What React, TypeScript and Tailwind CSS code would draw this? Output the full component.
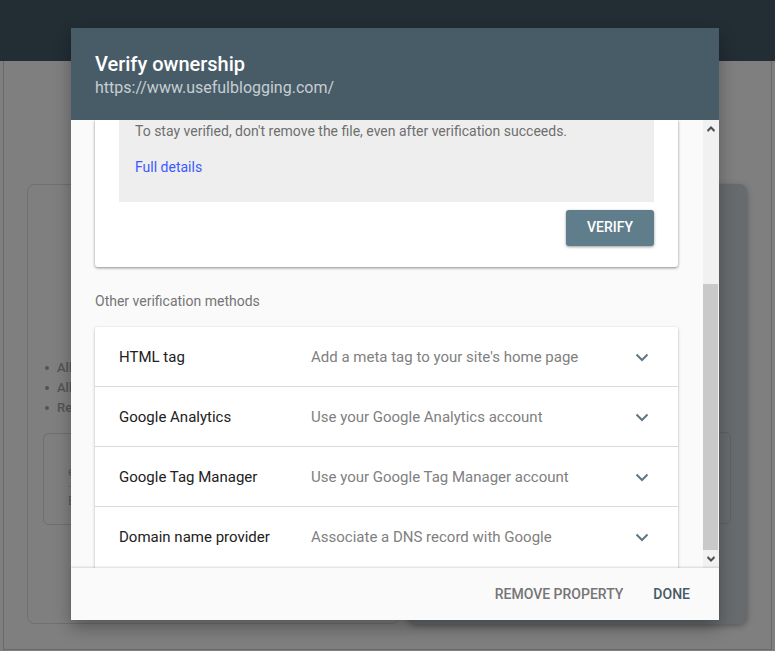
import React from "react";

const methods = [
  { name: "HTML tag", desc: "Add a meta tag to your site's home page" },
  { name: "Google Analytics", desc: "Use your Google Analytics account" },
  { name: "Google Tag Manager", desc: "Use your Google Tag Manager account" },
  { name: "Domain name provider", desc: "Associate a DNS record with Google" },
];

function Chevron() {
  return (
    <svg width="14" height="9" viewBox="0 0 14 9" fill="none" className="block">
      <path d="M1.5 1.5 7 7l5.5-5.5" stroke="#5f7683" strokeWidth="2" />
    </svg>
  );
}

function Background() {
  return (
    <div className="h-[651px] w-[775px] overflow-hidden bg-[#7f7f7f] font-['Roboto',sans-serif]">
      <div className="h-[61px] bg-[#222d34]" />
      <div className="mx-[3px] h-[589px] border-x border-b border-[#666a6c] px-[23px] pt-[123px]">
        <div className="flex gap-2">
          {/* left card */}
          <div className="h-[440px] w-[373px] rounded-lg border border-[#6f6f6f] px-[15px] pt-[173px]">
            <ul className="flex flex-col text-[13px] font-medium leading-5 text-[#4f5558]">
              <li className="flex items-center gap-2 pl-[2px]"><span className="size-1 rounded-full bg-[#4f5558]" />All users</li>
              <li className="flex items-center gap-2 pl-[2px]"><span className="size-1 rounded-full bg-[#4f5558]" />All data</li>
              <li className="flex items-center gap-2 pl-[2px]"><span className="size-1 rounded-full bg-[#4f5558]" />Requires</li>
            </ul>
            <div className="mt-[15px] h-[92px] w-[350px] rounded-md border border-[#6f6f6f] px-6 pt-7 text-[13px] text-[#5a5a5a]">
              <div className="border-b border-[#6f6f6f] pb-1">example</div>
              <div className="pt-1">Enter</div>
            </div>
          </div>
          {/* right card */}
          <div className="h-[440px] w-[339px] rounded-lg bg-[#676b6d] pr-4 pt-[248px] shadow-[0_2px_6px_rgba(0,0,0,0.3)]">
            <div className="ml-auto h-[92px] w-[100px] rounded-md border border-[#5d6163]" />
          </div>
        </div>
      </div>
    </div>
  );
}

export default function App() {
  return (
    <div className="relative h-[651px] w-[775px] overflow-hidden font-['Roboto',sans-serif]">
      <Background />
      {/* modal */}
      <div className="absolute left-[71px] top-[28px] flex h-[592px] w-[648px] flex-col bg-[#fafafa] shadow-[0_8px_16px_rgba(0,0,0,0.3)]">
        <div className="h-[92px] shrink-0 bg-[#485c68] px-6 pt-[23px]">
          <div className="text-[20px] font-medium leading-[26px] text-white">Verify ownership</div>
          <div className="mt-px text-[16px] leading-[20px] text-[#c6ced3]">https://www.usefulblogging.com/</div>
        </div>

        <div className="flex min-h-0 flex-1">
          <div className="min-w-0 flex-1 overflow-hidden pl-6 pr-[25px]">
            <div className="rounded-b-[3px] bg-white px-6 pb-[21px] shadow-[0_1px_3px_rgba(0,0,0,0.45)]">
              <div className="bg-[#eeeeee] px-4 pb-[25px] pt-px text-[14px] leading-5 text-[#6f6f6f]">
                <p>To stay verified, don't remove the file, even after verification succeeds.</p>
                <a className="mt-4 block text-[#3d5afe]">Full details</a>
              </div>
              <div className="mt-2 flex justify-end">
                <button className="h-9 w-[88px] rounded-[3px] bg-[#607d8b] pb-px text-[14px] font-medium text-white shadow-[0_1px_3px_rgba(0,0,0,0.4)]">
                  VERIFY
                </button>
              </div>
            </div>

            <div className="mt-6 text-[14px] leading-5 text-[#757575]">Other verification methods</div>

            <div className="mt-4 h-[260px] rounded-t-[3px] bg-white shadow-[0_1px_3px_rgba(0,0,0,0.3)]">
              {methods.map((m, i) => (
                <div
                  key={m.name}
                  className={`flex h-[60px] items-center pl-6 pr-[29px] pt-px text-[15px] ${i < methods.length - 1 ? "border-b border-[#dadada]" : ""}`}
                >
                  <div className="w-[192px] text-[#212121]">{m.name}</div>
                  <div className="flex-1 text-[#808080]">{m.desc}</div>
                  <Chevron />
                </div>
              ))}
            </div>
          </div>

          {/* scrollbar */}
          <div className="flex w-4 shrink-0 flex-col bg-[#f1f1f1]">
            <div className="flex h-[17px] items-center justify-center">
              <svg width="8" height="6" viewBox="0 0 8 6"><path d="M0 4 4 0l4 4-1 2-3-3-3 3z" fill="#505050" /></svg>
            </div>
            <div className="h-[147px]" />
            <div className="mr-px h-[266px] bg-[#c9c9c9]" />
            <div className="flex flex-1 items-center justify-center">
              <svg width="8" height="6" viewBox="0 0 8 6"><path d="M0 2 4 6l4-4-1-2-3 3-3-3z" fill="#505050" /></svg>
            </div>
          </div>
        </div>

        <div className="z-10 flex h-[52px] shrink-0 items-center justify-end gap-[30px] bg-[#fafafa] pr-[29px] text-[14px] font-medium shadow-[0_-1px_2px_rgba(0,0,0,0.15)]">
          <span className="text-[#757575]">REMOVE PROPERTY</span>
          <span className="text-[#455a64]">DONE</span>
        </div>
      </div>
    </div>
  );
}
